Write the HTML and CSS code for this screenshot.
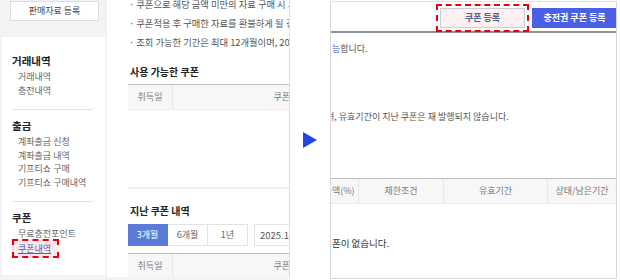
FILE: index.html
```html
<!DOCTYPE html>
<html>
	<head>
		<meta charset="utf-8" />
		<title>쿠폰내역</title>
		<link rel="stylesheet" href="styles.css">
	</head>
	<body>
		<div class="shot shot-left">
			<div class="side">
				<div class="side-top">
					<div class="btn-sell">판매자료 등록</div>
				</div>
				<div class="menu">
					<div class="menu-title">거래내역</div>
					<ul>
						<li>거래내역</li>
						<li>충전내역</li>
					</ul>
					<div class="menu-line"></div>
					<div class="menu-title">출금</div>
					<ul>
						<li>계좌출금 신청</li>
						<li>계좌출금 내역</li>
						<li>기프티쇼 구매</li>
						<li>기프티쇼 구매내역</li>
					</ul>
					<div class="menu-line"></div>
					<div class="menu-title">쿠폰</div>
					<ul>
						<li>무료충전포인트</li>
						<li class="current"><a href="#" class="mark">쿠폰내역</a></li>
					</ul>
				</div>
			</div>
			<div class="main">
				<ul class="notes">
					<li>· 쿠폰으로 해당 금액 미만의 자료 구매 시 사용이 불가능합니다.</li>
					<li>· 쿠폰적용 후 구매한 자료를 환불하게 될 경우</li>
					<li>· 조회 가능한 기간은 최대 12개월이며, 2025년</li>
				</ul>
				<h3 class="title">사용 가능한 쿠폰</h3>
				<div class="thead">
					<span class="col-date">취득일</span>
					<span class="col-name">쿠폰명</span>
				</div>
				<div class="sep"></div>
				<h3 class="title title-past">지난 쿠폰 내역</h3>
				<div class="periods">
					<span class="period on">3개월</span>
					<span class="period">6개월</span>
					<span class="period">1년</span>
					<span class="date-box">2025.10.01</span>
				</div>
				<div class="thead thead-past">
					<span class="col-date">취득일</span>
					<span class="col-name">쿠폰명</span>
				</div>
			</div>
		</div>

		<div class="gap">
			<svg width="14" height="16" viewBox="0 0 14 16"><polygon points="0,0 14,8 0,16" fill="#2446e2"/></svg>
		</div>

		<div class="shot shot-right">
			<div class="toolbar">
				<span class="btn-coupon mark-box">쿠폰 등록</span>
				<span class="btn-charge">충전권 쿠폰 등록</span>
			</div>
			<div class="body">
				<p class="line line-one"><em>능</em>합니다.</p>
				<p class="line line-two"><span class="cut">며, </span>유효기간이 지난 쿠폰은 재 발행되지 않습니다.</p>
				<div class="rhead">
					<span class="c1">액(%)</span>
					<span class="c2">제한조건</span>
					<span class="c3">유효기간</span>
					<span class="c4">상태/남은기간</span>
				</div>
				<p class="empty">폰이 없습니다.</p>
			</div>
		</div>
	</body>
</html>
```

FILE: styles.css
```css
* {
	margin: 0;
	padding: 0;
	box-sizing: border-box;
}

body {
	width: 620px;
	height: 280px;
	display: flex;
	background: #fff;
	font-family: "Noto Sans CJK KR", "Noto Sans", sans-serif;
	font-size: 9px;
	color: #555;
	overflow: hidden;
}

ul {
	list-style: none;
}

a {
	color: inherit;
}

.shot {
	height: 280px;
	overflow: hidden;
	flex: none;
}

/* left screenshot */
.shot-left {
	width: 290px;
	display: flex;
	background: #f2f3f5;
}

.side {
	width: 107px;
	flex: none;
}

.side-top {
	height: 37px;
	padding: 1px 0 0 10px;
}

.btn-sell {
	width: 89px;
	height: 20px;
	line-height: 18px;
	border: 1px solid #dcdde0;
	background: #fff;
	text-align: center;
	color: #444;
}

.menu {
	margin-left: 2px;
	width: 103px;
	height: 238px;
	background: #fff;
	padding: 17px 10px 0 10px;
}

.menu-title {
	font-size: 10.5px;
	font-weight: bold;
	color: #222;
	line-height: 14px;
	margin-bottom: 2px;
}

.menu li {
	line-height: 13.5px;
	padding-left: 6px;
	color: #666;
}

.menu li.current {
	margin-top: 1px;
}

.menu-line {
	height: 1px;
	background: #e3e4e7;
	margin: 12px 2px 9px 0;
}

.mark {
	color: #4b5fb4;
	text-decoration: underline;
	margin-left: -6px;
	padding: 1px 6px 1px 4px;
	border: 2px dashed #e60012;
	background: #fde9ee;
}

.main {
	width: 183px;
	height: 277px;
	background: #fff;
	border-right: 1px solid #dedede;
	padding-left: 21px;
	overflow: hidden;
	white-space: nowrap;
}

.notes {
	margin-top: -5px;
	line-height: 19px;
	font-size: 9.3px;
}

.notes li {
	padding-left: 1px;
}

.title {
	font-size: 10px;
	font-weight: bold;
	color: #222;
	line-height: 14px;
	margin: 13px 0 5px 2px;
}

.thead {
	display: flex;
	width: 300px;
	height: 26px;
	border-top: 1px solid #bdbdbd;
	border-bottom: 1px solid #ececec;
	background: #f7f7f7;
	color: #777;
}

.thead span {
	flex: none;
	line-height: 24px;
	text-align: center;
}

.col-date {
	width: 45px;
	border-right: 1px solid #e6e6e6;
}

.col-name {
	width: 226px;
}

.sep {
	height: 2px;
	background: #eee;
	margin-top: 77px;
	width: 200px;
}

.title-past {
	margin-top: 15px;
	margin-bottom: 6px;
}

.periods {
	display: flex;
	width: 300px;
	height: 22px;
}

.period {
	flex: none;
	width: 40px;
	border: 1px solid #e2e2e2;
	border-left: none;
	line-height: 20px;
	text-align: center;
	color: #666;
}

.period.on {
	background: #5a7cd8;
	border-color: #5a7cd8;
	color: #fff;
}

.date-box {
	flex: none;
	margin-left: 6px;
	width: 70px;
	border: 1px solid #e2e2e2;
	line-height: 20px;
	padding-left: 5px;
	font-size: 9.5px;
	color: #555;
}

.thead-past {
	margin-top: 7px;
	height: 25px;
}

/* arrow between the shots */
.gap {
	width: 40px;
	flex: none;
	display: flex;
	align-items: center;
	justify-content: center;
}

/* right screenshot */
.shot-right {
	width: 287px;
	margin-top: 1px;
	height: 278px;
	border: 1px solid #d9d9d9;
	border-top-color: #e4e4e4;
	background: #fff;
}

.toolbar {
	height: 31px;
	border-bottom: 2px solid #8b8f99;
	display: flex;
	justify-content: flex-end;
	align-items: flex-start;
	gap: 7px;
	padding-top: 5px;
}

.btn-coupon,
.btn-charge {
	width: 85px;
	height: 20px;
	line-height: 18px;
	text-align: center;
	font-weight: bold;
}

.btn-coupon {
	background: #fdf0f0;
	border: 1px solid #c9ccd9;
	color: #55608a;
	margin-top: 1px;
}

.mark-box {
	outline: 2px dashed #e60012;
	outline-offset: 2px;
}

.btn-charge {
	background: #4b5ee6;
	border: 1px solid #4b5ee6;
	color: #fff;
	margin-top: 1px;
	margin-right: -1px;
}

.body {
	overflow: hidden;
	white-space: nowrap;
	color: #555;
}

.line {
	line-height: 14px;
	padding-left: 1px;
}

.line-one {
	margin-top: 9px;
}

.line-one em {
	font-style: normal;
	color: #3b5bd6;
}

.line-two {
	margin-top: 54px;
}

.cut {
	margin-left: -6px;
}

.rhead {
	display: flex;
	margin-top: 54px;
	height: 26px;
	border-top: 1px solid #bdbdbd;
	border-bottom: 1px solid #ececec;
	background: #f7f7f7;
	color: #777;
}

.rhead span {
	line-height: 24px;
	text-align: center;
	border-right: 1px solid #e6e6e6;
}

.rhead .c1 {
	width: 28px;
	text-align: left;
	padding-left: 1px;
}

.rhead .c2 {
	width: 85px;
}

.rhead .c3 {
	width: 104px;
}

.rhead .c4 {
	flex: 1;
	border-right: none;
}

.empty {
	margin-top: 32px;
	line-height: 14px;
	padding-left: 1px;
	font-size: 9.5px;
	color: #333;
}
```
